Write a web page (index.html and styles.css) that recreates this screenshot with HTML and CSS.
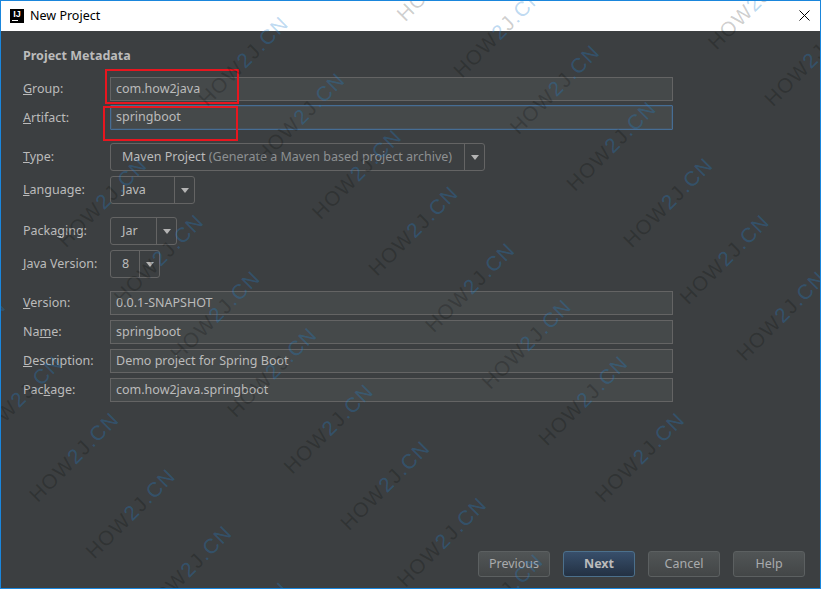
FILE: index.html
```html
<!DOCTYPE html>
<html lang="en">
<head>
    <meta charset="UTF-8">
    <meta name="viewport" content="width=device-width, initial-scale=1.0">
    <title>New Project</title>
    <link rel="stylesheet" href="styles.css">
</head>
<body>
    <div class="window">
        <div class="titlebar">
            <div class="app-icon"><span>IJ</span><i></i></div>
            <span class="title">New Project</span>
            <svg class="close" width="11" height="11" viewBox="0 0 11 11">
                <path d="M.5 .5l10 10M10.5 .5l-10 10" stroke="#000" stroke-width="1" fill="none"/>
            </svg>
        </div>

        <div class="content">
            <h1>Project Metadata</h1>

            <div class="group group-tight">
                <div class="row"><label class="up"><u>G</u>roup:</label><div class="field">com.how2java</div></div>
                <div class="row"><label><u>A</u>rtifact:</label><div class="field focused">springboot</div></div>
            </div>

            <div class="group">
                <div class="row">
                    <label class="up"><u>T</u>ype:</label>
                    <div class="combo combo-type">
                        <div class="combo-value">Maven Project <span class="hint">(Generate a Maven based project archive)</span></div>
                        <div class="combo-arrow"></div>
                    </div>
                </div>
                <div class="row">
                    <label class="up"><u>L</u>anguage:</label>
                    <div class="combo combo-language">
                        <div class="combo-value">Java</div>
                        <div class="combo-arrow"></div>
                    </div>
                </div>
            </div>

            <div class="group">
                <div class="row">
                    <label class="up">Packa<u>g</u>ing:</label>
                    <div class="combo combo-packaging">
                        <div class="combo-value">Jar</div>
                        <div class="combo-arrow"></div>
                    </div>
                </div>
                <div class="row">
                    <label class="up"><u>J</u>ava Version:</label>
                    <div class="combo combo-version">
                        <div class="combo-value">8</div>
                        <div class="combo-arrow"></div>
                    </div>
                </div>
            </div>

            <div class="group">
                <div class="row"><label class="up"><u>V</u>ersion:</label><div class="field">0.0.1-SNAPSHOT</div></div>
                <div class="row"><label class="up">Na<u>m</u>e:</label><div class="field">springboot</div></div>
                <div class="row"><label class="up"><u>D</u>escription:</label><div class="field">Demo project for Spring Boot</div></div>
                <div class="row"><label class="up">Pac<u>k</u>age:</label><div class="field">com.how2java.springboot</div></div>
            </div>

            <div class="buttons">
                <button>Previous</button>
                <button class="primary">Next</button>
                <button>Cancel</button>
                <button>Help</button>
            </div>
        </div>

        <div class="redbox redbox-group"></div>
        <div class="redbox redbox-artifact"></div>

        <svg class="watermark" id="watermark" width="819" height="587"></svg>
    </div>
    <script src="watermark.js"></script>
</body>
</html>
```

FILE: styles.css
```css
* {
    margin: 0;
    padding: 0;
    box-sizing: border-box;
}

body {
    font-family: "Noto Sans", "Open Sans", sans-serif;
    font-size: 12.5px;
    color: #bbbbbb;
    background: #fff;
}

.window {
    position: relative;
    width: 821px;
    height: 589px;
    border: 1px solid #1a86dc;
    display: flex;
    flex-direction: column;
    overflow: hidden;
}

/* title bar */
.titlebar {
    height: 30px;
    background: #fff;
    color: #000;
    display: flex;
    align-items: center;
    padding: 0 10px 0 9px;
    flex-shrink: 0;
}

.app-icon {
    width: 14px;
    height: 14px;
    background: #000;
    color: #fff;
    font-family: "Liberation Sans", sans-serif;
    font-size: 9px;
    font-weight: bold;
    line-height: 9px;
    text-align: center;
    display: flex;
    flex-direction: column;
    align-items: center;
    padding-top: 1px;
    margin-right: 6px;
}

.app-icon i {
    display: block;
    width: 6px;
    height: 1px;
    background: #fff;
    margin: 1px 5px 0 0;
}

.title {
    font-size: 12.5px;
    line-height: 30px;
}

.close {
    margin-left: auto;
    margin-top: -1px;
}

/* dialog body */
.content {
    flex: 1;
    background: #3c3f41;
    padding: 17px 0 11px 22px;
    display: flex;
    flex-direction: column;
}

h1 {
    font-size: 12.5px;
    font-weight: bold;
    line-height: 16px;
    margin-bottom: 13px;
}

.group {
    display: flex;
    flex-direction: column;
    gap: 5px;
    margin-bottom: 13px;
}

.group-tight {
    gap: 4px;
}

.row {
    display: flex;
    align-items: center;
}

label {
    width: 87px;
    flex-shrink: 0;
}

label.up {
    margin-top: -2px;
}

.field {
    width: 563px;
    height: 24px;
    line-height: 21px;
    padding-left: 5px;
    background: #45494a;
    border: 1px solid #646464;
}

.focused {
    height: 25px;
    line-height: 22px;
    border: 1px solid #466d94;
    box-shadow: inset 0 0 0 1px rgba(70, 109, 148, 0.25);
    border-radius: 1px;
}

.combo {
    height: 28px;
    display: flex;
    border: 1px solid #646464;
    border-radius: 3px;
}

.combo-type { width: 375px; }
.combo-language { width: 85px; }
.combo-packaging { width: 67px; }
.combo-version { width: 50px; }

.combo-value {
    flex: 1;
    line-height: 25px;
    padding-left: 11px;
}

.hint {
    color: #8d9092;
}

.combo-arrow {
    width: 20px;
    border-left: 1px solid #646464;
    display: flex;
    align-items: center;
    justify-content: center;
}

.combo-arrow::after {
    content: "";
    border-left: 4px solid transparent;
    border-right: 4px solid transparent;
    border-top: 5px solid #b4b4b4;
}

/* bottom buttons */
.buttons {
    margin-top: auto;
    display: flex;
    justify-content: flex-end;
    gap: 13px;
    padding-right: 15px;
}

button {
    width: 72px;
    height: 26px;
    padding-bottom: 2px;
    font-family: inherit;
    font-size: 12.5px;
    color: #a9abad;
    background: linear-gradient(#515556, #434647);
    border: 1px solid #5c6061;
    border-radius: 3px;
}

button.primary {
    font-weight: bold;
    color: #bbbbbb;
    background: linear-gradient(#384f6b, #233143);
    border-color: #4c708c;
}

/* red marks drawn on the screenshot */
.redbox {
    position: absolute;
    border: 2px solid #e8161f;
}

.redbox-group {
    left: 104px;
    top: 68px;
    width: 134px;
    height: 35px;
}

.redbox-artifact {
    left: 102px;
    top: 105px;
    width: 135px;
    height: 35px;
}

/* site watermark, repeats over everything */
.watermark {
    position: absolute;
    left: 0;
    top: 0;
    pointer-events: none;
}

.wm-text {
    font-family: "Liberation Sans", sans-serif;
    font-size: 20.5px;
    letter-spacing: 1.2px;
    text-anchor: middle;
}

.wm-dark {
    fill: rgba(0, 0, 0, 0.2);
}

.wm-blue {
    fill: rgba(32, 130, 209, 0.3);
}
```

FILE: watermark.js
```js
// lay the HOW2J.CN text on a rotated 200x80 grid
const svg = document.getElementById('watermark');
const parts = [['HOW', 'wm-dark'], ['2', 'wm-blue'], ['J', 'wm-dark'], ['.CN', 'wm-blue']];
const ns = 'http://www.w3.org/2000/svg';

for (let i = -1; i <= 4; i++) {
    // only eight diagonal rows are covered, the corners stay empty
    for (let j = -2; j <= 5; j++) {
        const x = 73 + i * 141.4 + j * 56.6;
        const y = 456 - i * 141.4 + j * 56.6;
        if (x < -42 || x > 862 || y < -42 || y > 630) continue;

        const text = document.createElementNS(ns, 'text');
        text.setAttribute('class', 'wm-text');
        text.setAttribute('transform', `translate(${x} ${y}) rotate(-45) translate(0 7)`);
        parts.forEach(function(part) {
            const span = document.createElementNS(ns, 'tspan');
            span.setAttribute('class', part[1]);
            span.textContent = part[0];
            text.appendChild(span);
        });
        svg.appendChild(text);
    }
}
```
